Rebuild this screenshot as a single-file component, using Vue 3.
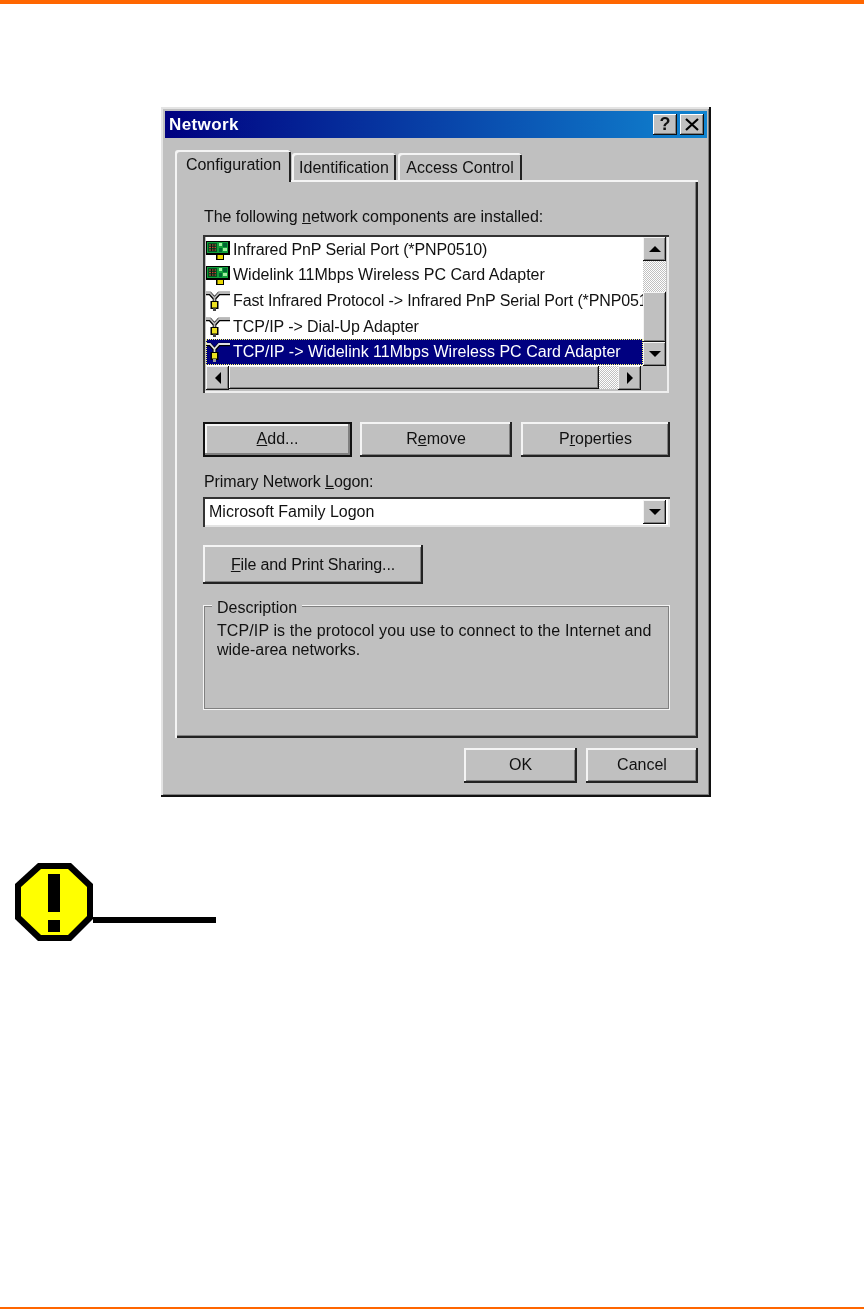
<script setup>
const filas = [
  { tipo: 'tarjeta', texto: 'Infrared PnP Serial Port (*PNP0510)', ajuste: -0.12 },
  { tipo: 'tarjeta', texto: 'Widelink 11Mbps Wireless PC Card Adapter', ajuste: 0 },
  { tipo: 'protocolo', texto: 'Fast Infrared Protocol -> Infrared PnP Serial Port (*PNP0510)', ajuste: -0.12 },
  { tipo: 'protocolo', texto: 'TCP/IP -> Dial-Up Adapter', ajuste: -0.08 },
  { tipo: 'protocolo', texto: 'TCP/IP -> Widelink 11Mbps Wireless PC Card Adapter', ajuste: 0.02, activa: true }
];
</script>

<template>
  <div class="pagina">
    <div class="barra_top"></div>

    <div class="ventana">
      <div class="titulo">
        <span class="titulo_texto">Network</span>
        <div class="titulo_btns">
          <button class="btn_mini">?</button>
          <button class="btn_mini btn_x">
            <svg width="14" height="13" viewBox="0 0 14 13"><path d="M1 1l12 11M13 1L1 12" stroke="#000" stroke-width="2.2" fill="none"/></svg>
          </button>
        </div>
      </div>

      <div class="tabs">
        <div class="tab tab_activa">Configuration</div>
        <div class="tab tab_id">Identification</div>
        <div class="tab tab_acc">Access Control</div>
      </div>

      <div class="panel">
        <div class="etiqueta">The following <u>n</u>etwork components are installed:</div>

        <div class="lista">
          <div class="filas">
            <div v-for="fila in filas" :key="fila.texto" class="fila" :class="{ fila_activa: fila.activa }">
              <svg v-if="fila.tipo === 'tarjeta'" class="icono" width="24" height="20" viewBox="0 0 24 20">
                <rect x="10" y="13" width="8" height="7" fill="#000"/>
                <rect x="11.500" y="14" width="5.500" height="5" fill="#e8d800"/>
                <rect x="0" y="1" width="24" height="14" fill="#000"/>
                <rect x="1" y="2" width="21" height="11" fill="#12a03a"/>
                <rect x="2" y="3" width="9" height="9" fill="#052"/>
                <path d="M3 5h7M3 7.500h7M3 10h7" stroke="#d04030" stroke-width="1"/>
                <path d="M5.500 4v7M8 4v7" stroke="#111" stroke-width="1"/>
                <rect x="13" y="3" width="3" height="3" fill="#a0f0a0"/>
                <rect x="17" y="3" width="4" height="4" fill="#063"/>
                <rect x="13" y="8" width="3" height="4" fill="#063"/>
                <rect x="17" y="8" width="4" height="3" fill="#a0f0a0"/>
              </svg>
              <svg v-else class="icono" width="24" height="20" viewBox="0 0 24 20">
                <path d="M0 2.500h4l4.500 5 4.500-5h11M8.500 7v5" fill="none" stroke="#000" stroke-width="3.600"/>
                <path d="M0 2h4l4.500 5 4.500-5h11M8.500 7v4" fill="none" :stroke="fila.activa ? '#e0e0e0' : '#b8b8b8'" stroke-width="1.800"/>
                <rect x="4.500" y="10" width="8" height="8" fill="#000"/>
                <rect x="6" y="11" width="5" height="5.500" fill="#ece020"/>
                <rect x="7" y="17" width="3" height="3" :fill="fila.activa ? '#999' : '#444'"/>
              </svg>
              <span class="fila_texto" :style="{ letterSpacing: fila.ajuste + 'px' }">{{ fila.texto }}</span>
            </div>
          </div>

          <div class="scroll_v">
            <button class="btn_scroll"><i class="flecha arriba"></i></button>
            <div class="tramado tramado_v"></div>
            <div class="pulgar pulgar_v"></div>
            <button class="btn_scroll"><i class="flecha abajo"></i></button>
          </div>
          <div class="scroll_h">
            <button class="btn_scroll"><i class="flecha izq"></i></button>
            <div class="pulgar pulgar_h"></div>
            <div class="tramado tramado_h"></div>
            <button class="btn_scroll"><i class="flecha der"></i></button>
          </div>
          <div class="esquina"></div>
        </div>

        <div class="fila_btns">
          <button class="btn btn_def btn_add"><u>A</u>dd...</button>
          <button class="btn btn_rem">R<u>e</u>move</button>
          <button class="btn btn_prop">P<u>r</u>operties</button>
        </div>

        <div class="etiqueta etiqueta_logon">Primary Network <u>L</u>ogon:</div>
        <div class="combo">
          <span class="combo_texto">Microsoft Family Logon</span>
          <button class="btn_scroll btn_combo"><i class="flecha abajo"></i></button>
        </div>

        <button class="btn btn_file"><u>F</u>ile and Print Sharing...</button>

        <div class="grupo">
          <span class="leyenda">Description</span>
          <p class="descripcion"><span class="linea_larga">TCP/IP is the protocol you use to connect to the Internet and</span> wide-area networks.</p>
        </div>
      </div>

      <div class="pie">
        <button class="btn btn_ok">OK</button>
        <button class="btn btn_cancel">Cancel</button>
      </div>
    </div>

    <div class="aviso">
      <svg width="78" height="78" viewBox="0 0 78 78">
        <polygon points="23,0 56,0 78,21 78,56 56,78 23,78 0,56 0,21" fill="#000"/>
        <polygon points="26,6 53,6 72,24 72,53 53,72 26,72 6,53 6,24" fill="#ff0"/>
        <rect x="33" y="11" width="12" height="38" fill="#000"/>
        <rect x="33" y="57" width="12" height="12" fill="#000"/>
      </svg>
      <div class="aviso_linea"></div>
    </div>

    <div class="barra_bottom"></div>
  </div>
</template>

<style>
html, body {
  margin: 0;
  background: #fff;
}
</style>

<style scoped>
* {
  box-sizing: border-box;
}

.pagina {
  height: 1309px;
  display: flex;
  flex-direction: column;
  background: #fff;
  font-family: "Liberation Sans", Arial, sans-serif;
  font-size: 16px;
  color: #111;
  overflow: hidden;
}

.barra_top {
  height: 4px;
  background: #ff6600;
}

.barra_bottom {
  height: 2px;
  margin-top: auto;
  background: #ff6600;
}

.ventana {
  width: 550px;
  height: 690px;
  margin: 103px 0 0 161px;
  padding: 4px;
  background: #c0c0c0;
  box-shadow: inset -2px -2px 0 #111, inset 2px 2px 0 #e4e4e4, inset -3px -3px 0 #808080;
  filter: blur(0.45px);
}

.titulo {
  height: 27px;
  display: flex;
  align-items: center;
  justify-content: space-between;
  padding: 0 3px 0 4px;
  background: linear-gradient(90deg, #000080, #1084d0);
}

.titulo_texto {
  color: #fff;
  font-weight: bold;
  font-size: 17px;
  letter-spacing: 0.4px;
}

.titulo_btns {
  display: flex;
  gap: 3px;
}

.btn_mini {
  width: 24px;
  height: 21px;
  padding: 0;
  border: none;
  display: flex;
  align-items: center;
  justify-content: center;
  background: #c0c0c0;
  font: bold 18px "Liberation Sans", Arial, sans-serif;
  color: #111;
  box-shadow: inset -1px -1px 0 #111, inset 1px 1px 0 #fff, inset -2px -2px 0 #808080;
}

.tabs {
  height: 30px;
  margin: 12px 0 0 10px;
  display: flex;
  align-items: flex-end;
  gap: 1px;
  position: relative;
  z-index: 1;
}

.tab {
  height: 27px;
  padding-top: 2px;
  display: flex;
  align-items: center;
  justify-content: center;
  background: #c0c0c0;
  border-radius: 3px 3px 0 0;
  box-shadow: inset 2px 2px 0 #f4f4f4, inset -2px 0 0 #222;
}

.tab_activa {
  width: 116px;
  height: 32px;
  margin-bottom: -2px;
  padding: 0 0 2px 1px;
}

.tab_id {
  width: 104px;
}

.tab_acc {
  width: 124px;
  margin-left: 1px;
}

.panel {
  width: 523px;
  height: 558px;
  margin-left: 10px;
  padding: 27px 28px 0;
  display: flex;
  flex-direction: column;
  box-shadow: inset 2px 2px 0 #f4f4f4, inset -2px -2px 0 #222, inset -3px -3px 0 #808080;
}

.etiqueta {
  height: 20px;
  padding-left: 1px;
  line-height: 20px;
  letter-spacing: -0.05px;
}

.etiqueta_logon {
  margin-top: 15px;
  letter-spacing: -0.1px;
}

.lista {
  width: 466px;
  height: 158px;
  margin-top: 8px;
  padding: 2px 3px 4px;
  display: grid;
  grid-template-columns: 437px 23px;
  grid-template-rows: 129px 23px;
  background: #c0c0c0;
  box-shadow: inset 2px 2px 0 #333, inset -2px -2px 0 #eeeeee;
}

.filas {
  background: #fff;
  overflow: hidden;
}

.fila {
  height: 25.6px;
  display: flex;
  align-items: center;
  white-space: nowrap;
  overflow: hidden;
}

.icono {
  flex: none;
  margin-right: 3px;
}

.fila_texto {
  flex: none;
}

.fila_activa {
  background: #000080;
  color: #fff;
  outline: 1px dotted #ffff70;
  outline-offset: -1px;
}

.scroll_v {
  display: flex;
  flex-direction: column;
}

.scroll_h {
  display: flex;
}

.btn_scroll {
  flex: none;
  width: 23px;
  height: 24px;
  padding: 0;
  border: none;
  display: flex;
  align-items: center;
  justify-content: center;
  background: #c0c0c0;
  box-shadow: inset -1px -1px 0 #111, inset 1px 1px 0 #f4f4f4, inset -2px -2px 0 #808080;
}

.tramado {
  background: repeating-conic-gradient(#fff 0 25%, #c0c0c0 0 50%) 0 0 / 2px 2px;
}

.tramado_v {
  height: 31px;
}

.tramado_h {
  width: 19px;
}

.pulgar {
  background: #c0c0c0;
  box-shadow: inset -1px -1px 0 #111, inset 1px 1px 0 #f4f4f4, inset -2px -2px 0 #808080;
}

.pulgar_v {
  height: 50px;
}

.pulgar_h {
  width: 370px;
}

.flecha {
  width: 0;
  height: 0;
  border: 6px solid transparent;
}

.arriba {
  border-top: 0;
  border-bottom-color: #000;
}

.abajo {
  border-bottom: 0;
  border-top-color: #000;
}

.izq {
  border-left: 0;
  border-right-color: #000;
}

.der {
  border-right: 0;
  border-left-color: #000;
}

.fila_btns {
  margin-top: 29px;
  display: flex;
}

.btn {
  height: 35px;
  padding: 0 0 2px;
  border: none;
  background: #c0c0c0;
  font: 16px "Liberation Sans", Arial, sans-serif;
  color: #111;
  box-shadow: inset -2px -2px 0 #222, inset 2px 2px 0 #f4f4f4, inset -3px -3px 0 #808080;
}

.btn_def {
  box-shadow: inset 0 0 0 2px #111, inset -4px -4px 0 #808080, inset 4px 4px 0 #f4f4f4;
}

.btn_add {
  width: 149px;
}

.btn_rem {
  width: 152px;
  margin-left: 8px;
}

.btn_prop {
  width: 149px;
  margin-left: 9px;
}

.combo {
  width: 467px;
  height: 30px;
  margin-top: 5px;
  display: flex;
  align-items: center;
  justify-content: space-between;
  padding: 3px 4px 3px 6px;
  background: #fff;
  box-shadow: inset 2px 2px 0 #333, inset -2px -2px 0 #e4e4e4;
}

.btn_combo {
  height: 24px;
}

.btn_file {
  width: 220px;
  height: 39px;
  margin-top: 18px;
  padding: 0;
  letter-spacing: -0.12px;
}

.grupo {
  width: 465px;
  height: 103px;
  margin: 22px 0 0 1px;
  padding: 15px 13px 0;
  position: relative;
  box-shadow: inset 0 0 0 1px #808080, 0 0 0 1px #f4f4f4;
}

.leyenda {
  position: absolute;
  left: 8px;
  top: -8px;
  padding: 0 5px;
  line-height: 20px;
  background: #c0c0c0;
}

.descripcion {
  margin: 0;
  line-height: 19px;
}

.linea_larga {
  letter-spacing: 0.1px;
}

.pie {
  margin-top: 10px;
  padding-right: 9px;
  display: flex;
  justify-content: flex-end;
  gap: 9px;
}

.btn_ok {
  width: 113px;
}

.btn_cancel {
  width: 112px;
}

.aviso {
  margin: 66px 0 0 15px;
  display: flex;
  align-items: flex-start;
}

.aviso_linea {
  width: 123px;
  height: 6px;
  margin-top: 54px;
  background: #000;
}
</style>
